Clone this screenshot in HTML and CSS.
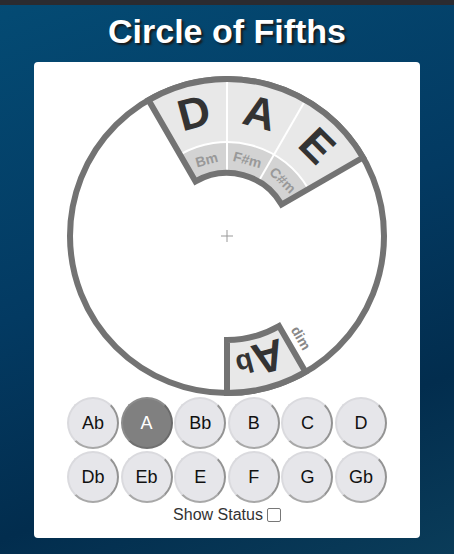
FILE: index.html
```html
<!DOCTYPE html>
<html lang="en">
<head>
  <meta charset="UTF-8" />
  <meta name="viewport" content="width=device-width, initial-scale=1.0"/>
  <title>Circle of Fifths</title>
  <link rel="stylesheet" href="styles.css">
</head>
<body>

<div class="topbar"></div>

<h1 class="title">Circle of Fifths</h1>

<div class="card">
  <svg class="wheel" width="386" height="335" viewBox="0 0 386 335">
    <circle cx="193" cy="174" r="157" fill="#fff" stroke="#737373" stroke-width="6"/>

    <!-- key wedge: D A E -->
    <path d="M114.5,38.03 A157,157 0 0 1 328.97,95.5 L274.4,127 A94,94 0 0 0 146,92.6 Z" fill="#e8e8e8"/>
    <path d="M146,92.6 A94,94 0 0 1 274.4,127 L247.6,142.5 A63,63 0 0 0 161.5,119.4 Z" fill="#d3d3d3"/>
    <g stroke="#fff" stroke-width="2" fill="none">
      <line x1="193" y1="111" x2="193" y2="17"/>
      <line x1="224.5" y1="119.4" x2="271.5" y2="38.03"/>
      <path d="M146,92.6 A94,94 0 0 1 274.4,127"/>
    </g>
    <path d="M114.5,38.03 A157,157 0 0 1 328.97,95.5 L247.6,142.5 A63,63 0 0 0 161.5,119.4 Z" fill="none" stroke="#737373" stroke-width="6"/>

    <g class="major">
      <text x="193" y="46" transform="rotate(-15 193 174)">D</text>
      <text x="193" y="46" transform="rotate(15 193 174)">A</text>
      <text x="193" y="46" transform="rotate(45 193 174)">E</text>
    </g>
    <g class="minor">
      <text x="193" y="95" transform="rotate(-15 193 174)">Bm</text>
      <text x="193" y="95" transform="rotate(15 193 174)">F#m</text>
      <text x="193" y="95" transform="rotate(45 193 174)">C#m</text>
    </g>

    <!-- diminished wedge -->
    <path d="M271.5,309.97 A157,157 0 0 1 193,331 L193,278 A104,104 0 0 0 245,264.06 Z" fill="#e8e8e8" stroke="#737373" stroke-width="6"/>
    <text class="major" x="193" y="46" transform="rotate(165 193 174)">A<tspan class="flat">b</tspan></text>
    <text class="dim" x="267" y="276" transform="rotate(60 267 276)">dim</text>

    <g stroke="#999" stroke-width="1">
      <line x1="187" y1="174" x2="199" y2="174"/>
      <line x1="193" y1="168" x2="193" y2="180"/>
    </g>
  </svg>

  <div class="keys">
    <button class="key">Ab</button>
    <button class="key active">A</button>
    <button class="key">Bb</button>
    <button class="key">B</button>
    <button class="key">C</button>
    <button class="key">D</button>
    <button class="key">Db</button>
    <button class="key">Eb</button>
    <button class="key">E</button>
    <button class="key">F</button>
    <button class="key">G</button>
    <button class="key">Gb</button>
  </div>

  <label class="status">Show Status <input type="checkbox" class="status-box"></label>
</div>

</body>
</html>
```

FILE: styles.css
```css
* { margin: 0; padding: 0; box-sizing: border-box; }
body {
  font-family: "Liberation Sans", Arial, sans-serif;
  background: linear-gradient(160deg, #044b74 0%, #033a62 45%, #022d4e 75%, #0a3c59 100%);
  min-height: 554px;
  color: white;
}

.topbar {
  height: 5px;
  background: #2b2b30;
}

.title {
  font-size: 34px;
  font-weight: bold;
  text-align: center;
  line-height: 36px;
  padding-top: 8px;
  margin-bottom: 13px;
  text-shadow: 2px 2px 2px #1a1a1a;
}

.card {
  width: 386px;
  height: 476px;
  margin: 0 auto;
  background: #fff;
  border-radius: 4px;
  color: #222;
}

.wheel { display: block; }

.major {
  font-size: 44px;
  font-weight: bold;
  fill: #333;
  text-anchor: middle;
  dominant-baseline: central;
}

.flat { font-size: 28px; }

.minor {
  font-size: 14px;
  font-weight: bold;
  fill: #999;
  text-anchor: middle;
  dominant-baseline: central;
}

.dim {
  font-size: 14px;
  font-weight: bold;
  fill: #888;
  text-anchor: middle;
  dominant-baseline: central;
}

.keys {
  display: grid;
  grid-template-columns: repeat(6, 52px);
  column-gap: 1.6px;
  row-gap: 2px;
  justify-content: center;
}

.key {
  width: 52px;
  height: 52px;
  border-radius: 50%;
  background: #e6e6ea;
  border: 2px solid;
  border-color: #dadade #939393 #a8a8a8 #dadade;
  font-family: "Liberation Sans", Arial, sans-serif;
  font-size: 18px;
  color: #111;
  cursor: pointer;
}

.key.active {
  background: #808080;
  color: #fff;
  border-color: #8c8c8c #6a6a6a #707070 #8c8c8c;
}

.status {
  display: flex;
  justify-content: center;
  align-items: center;
  gap: 4px;
  margin-top: 4px;
  font-size: 16px;
  line-height: 16px;
  color: #333;
}

.status-box {
  appearance: none;
  width: 14px;
  height: 14px;
  border: 1.5px solid #777;
  border-radius: 2px;
  background: #fff;
}
```
